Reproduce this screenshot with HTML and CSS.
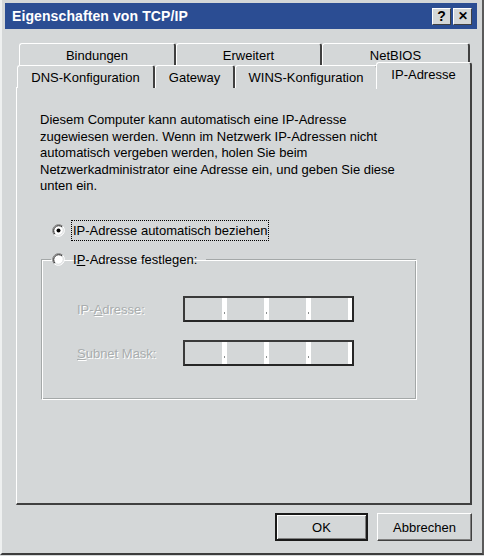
FILE: index.html
```html
<!DOCTYPE html>
<html lang="de">
<head>
<meta charset="utf-8">
<title>Eigenschaften von TCP/IP</title>
<link rel="stylesheet" href="styles.css">
</head>
<body>
<div class="window">
  <div class="titlebar">
    <span class="title">Eigenschaften von TCP/IP</span>
    <div class="tbtns">
      <span class="tbtn">?</span>
      <span class="tbtn close">&#x2715;</span>
    </div>
  </div>

  <div class="tabstrip">
    <div class="tabrow back">
      <div class="tab t-bind">Bindungen</div>
      <div class="tab t-erw">Erweitert</div>
      <div class="tab t-net">NetBIOS</div>
    </div>
    <div class="tabrow front">
      <div class="tab t-dns">DNS-Konfiguration</div>
      <div class="tab t-gw">Gateway</div>
      <div class="tab t-wins">WINS-Konfiguration</div>
      <div class="tab active t-ip">IP-Adresse</div>
    </div>
  </div>

  <div class="panel">
    <p class="intro">Diesem Computer kann automatisch eine IP-Adresse<br>zugewiesen werden. Wenn im Netzwerk IP-Adressen nicht<br>automatisch vergeben werden, holen Sie beim<br>Netzwerkadministrator eine Adresse ein, und geben Sie diese<br>unten ein.</p>

    <div class="radio-row">
      <svg class="radio" width="13" height="13" viewBox="0 0 13 13">
        <circle cx="6.5" cy="6.5" r="5.5" fill="#ffffff"/>
        <path d="M2.26 10.74 A6 6 0 0 1 10.74 2.26" fill="none" stroke="#808080" stroke-width="1"/>
        <path d="M10.74 2.26 A6 6 0 0 1 2.26 10.74" fill="none" stroke="#ffffff" stroke-width="1"/>
        <path d="M2.97 10.03 A5 5 0 0 1 10.03 2.97" fill="none" stroke="#202020" stroke-width="1"/>
        <path d="M10.03 2.97 A5 5 0 0 1 2.97 10.03" fill="none" stroke="#d4d7d8" stroke-width="1"/>
        <circle cx="6.5" cy="6.5" r="2" fill="#000000"/>
      </svg>
      <span class="focus">IP-Adresse automatisch beziehen</span>
    </div>

    <fieldset class="group">
      <legend class="legend">
        <svg class="radio" width="13" height="13" viewBox="0 0 13 13">
          <circle cx="6.5" cy="6.5" r="5.5" fill="#ffffff"/>
          <path d="M2.26 10.74 A6 6 0 0 1 10.74 2.26" fill="none" stroke="#808080" stroke-width="1"/>
          <path d="M10.74 2.26 A6 6 0 0 1 2.26 10.74" fill="none" stroke="#ffffff" stroke-width="1"/>
          <path d="M2.97 10.03 A5 5 0 0 1 10.03 2.97" fill="none" stroke="#202020" stroke-width="1"/>
          <path d="M10.03 2.97 A5 5 0 0 1 2.97 10.03" fill="none" stroke="#d4d7d8" stroke-width="1"/>
        </svg>
        <span class="legend-text">I<u>P</u>-Adresse festlegen:</span>
      </legend>

      <div class="field-row">
        <span class="dis-label">IP-<u>A</u>dresse:</span>
        <div class="ipbox">
          <span class="seg"></span><span class="dot"></span>
          <span class="seg"></span><span class="dot"></span>
          <span class="seg"></span><span class="dot"></span>
          <span class="seg"></span><span class="end"></span>
        </div>
      </div>
      <div class="field-row second">
        <span class="dis-label"><u>S</u>ubnet Mask:</span>
        <div class="ipbox">
          <span class="seg"></span><span class="dot"></span>
          <span class="seg"></span><span class="dot"></span>
          <span class="seg"></span><span class="dot"></span>
          <span class="seg"></span><span class="end"></span>
        </div>
      </div>
    </fieldset>
  </div>

  <div class="buttons">
    <button class="btn default">OK</button>
    <button class="btn">Abbrechen</button>
  </div>
</div>
</body>
</html>
```

FILE: styles.css
```css
html, body {
  margin: 0;
  padding: 0;
}

body {
  width: 484px;
  height: 556px;
  background: #d4d7d8;
  font-family: "Liberation Sans", Arial, sans-serif;
  font-size: 13px;
  color: #000;
  overflow: hidden;
}

.window {
  box-sizing: border-box;
  width: 484px;
  height: 555px;
  padding: 3px 5px 0 3px;
  border-left: 2px solid #eef0f0;
  border-right: 2px solid #5a5a5a;
  border-bottom: 2px solid #3c3c3c;
  background: #d4d7d8;
}

/* Title bar */
.titlebar {
  height: 26px;
  background: #2b4d93;
  display: flex;
  align-items: center;
  justify-content: space-between;
  padding: 0 5px 0 7px;
}

.title {
  color: #fff;
  font-weight: bold;
  font-size: 14px;
  letter-spacing: 0.1px;
}

.tbtns {
  display: flex;
  gap: 2px;
}

.tbtn {
  box-sizing: border-box;
  width: 19px;
  height: 17px;
  background: #d4d7d8;
  border-top: 1px solid #fff;
  border-left: 1px solid #fff;
  border-right: 1px solid #404040;
  border-bottom: 1px solid #404040;
  display: flex;
  align-items: center;
  justify-content: center;
  font-weight: bold;
  font-size: 14px;
  line-height: 1;
  color: #000;
}

.tbtn.close {
  font-size: 12px;
}

/* Tabs */
.tabstrip {
  margin: 14px 5px 0 11px;
  position: relative;
  z-index: 2;
}

.tabrow {
  display: flex;
}

.tabrow.back {
  height: 22px;
  padding-left: 3px;
}

.tabrow.front {
  height: 23px;
  padding-left: 1px;
}

.tab {
  box-sizing: border-box;
  height: 100%;
  display: flex;
  align-items: center;
  justify-content: center;
  border-top: 1px solid #fff;
  border-left: 1px solid #fff;
  border-right: 2px solid #404040;
  border-radius: 3px 3px 0 0;
  background: #d4d7d8;
  padding-top: 1px;
}

.t-bind { width: 157px; }
.t-erw { width: 146px; }
.t-net { width: 148px; }

.t-dns { width: 138px; }
.t-gw { width: 80px; }
.t-wins { width: 143px; }

.tab.active {
  width: 96px;
  height: 27px;
  margin-top: -3px;
  margin-left: -2px;
  padding-bottom: 4px;
  position: relative;
  z-index: 3;
}

/* Panel */
.panel {
  box-sizing: border-box;
  height: 418px;
  margin: -1px 5px 0 11px;
  border-top: 1px solid #fff;
  border-left: 1px solid #fff;
  border-right: 2px solid #404040;
  border-bottom: 2px solid #404040;
  padding: 24px 0 0 23px;
  position: relative;
  z-index: 1;
}

.intro {
  margin: 0;
  line-height: 16.5px;
}

.radio-row {
  display: flex;
  align-items: center;
  height: 20px;
  margin: 26px 0 0 12px;
  gap: 7px;
}

.radio {
  flex: none;
  display: block;
}

.focus {
  outline: 1px dotted #000;
  outline-offset: 0;
  padding: 2px 1px 2px 1px;
}

/* Group box */
.group {
  box-sizing: border-box;
  width: 376px;
  margin: 9px 0 0 1px;
  padding: 27px 0 33px 0;
  border: 1px solid;
  border-color: #a4a8a8 #ffffff #ffffff #a4a8a8;
  box-shadow: inset 1px 1px 0 #ffffff, inset -1px -1px 0 #a4a8a8;
  min-width: 0;
}

.legend {
  display: flex;
  align-items: center;
  gap: 8px;
  height: 20px;
  padding: 0 9px 0 1px;
  margin-left: 9px;
}

.field-row {
  display: flex;
  align-items: center;
  height: 25px;
  padding-left: 35px;
}

.field-row.second {
  margin-top: 19px;
}

.dis-label {
  width: 106px;
  color: #a9adae;
  text-shadow: 1px 1px 0 #ffffff;
}

.ipbox {
  box-sizing: border-box;
  width: 171px;
  height: 26px;
  border: 2px solid;
  border-color: #3a3a3a #262626 #262626 #3a3a3a;
  display: flex;
  background: #d4d7d8;
}

.seg {
  flex: 1;
}

.dot {
  width: 5px;
  background: #fff;
  position: relative;
}

.dot::after {
  content: "";
  position: absolute;
  left: 2px;
  top: 14px;
  width: 1px;
  height: 2px;
  background: #8a8e8e;
}

.end {
  width: 4px;
  background: #fff;
}

/* Buttons */
.buttons {
  display: flex;
  justify-content: flex-end;
  gap: 9px;
  margin: 8px 5px 0 0;
}

.btn {
  box-sizing: border-box;
  height: 28px;
  width: 95px;
  font-family: "Liberation Sans", Arial, sans-serif;
  font-size: 13px;
  color: #000;
  background: #d4d7d8;
  border: 1px solid;
  border-color: #ffffff #404040 #404040 #ffffff;
  box-shadow: inset -1px -1px 0 #808080;
  padding: 0;
}

.btn.default {
  width: 93px;
  border: 2px solid #1a1a1a;
  box-shadow: inset 1px 1px 0 #ffffff, inset -1px -1px 0 #808080;
}
```
